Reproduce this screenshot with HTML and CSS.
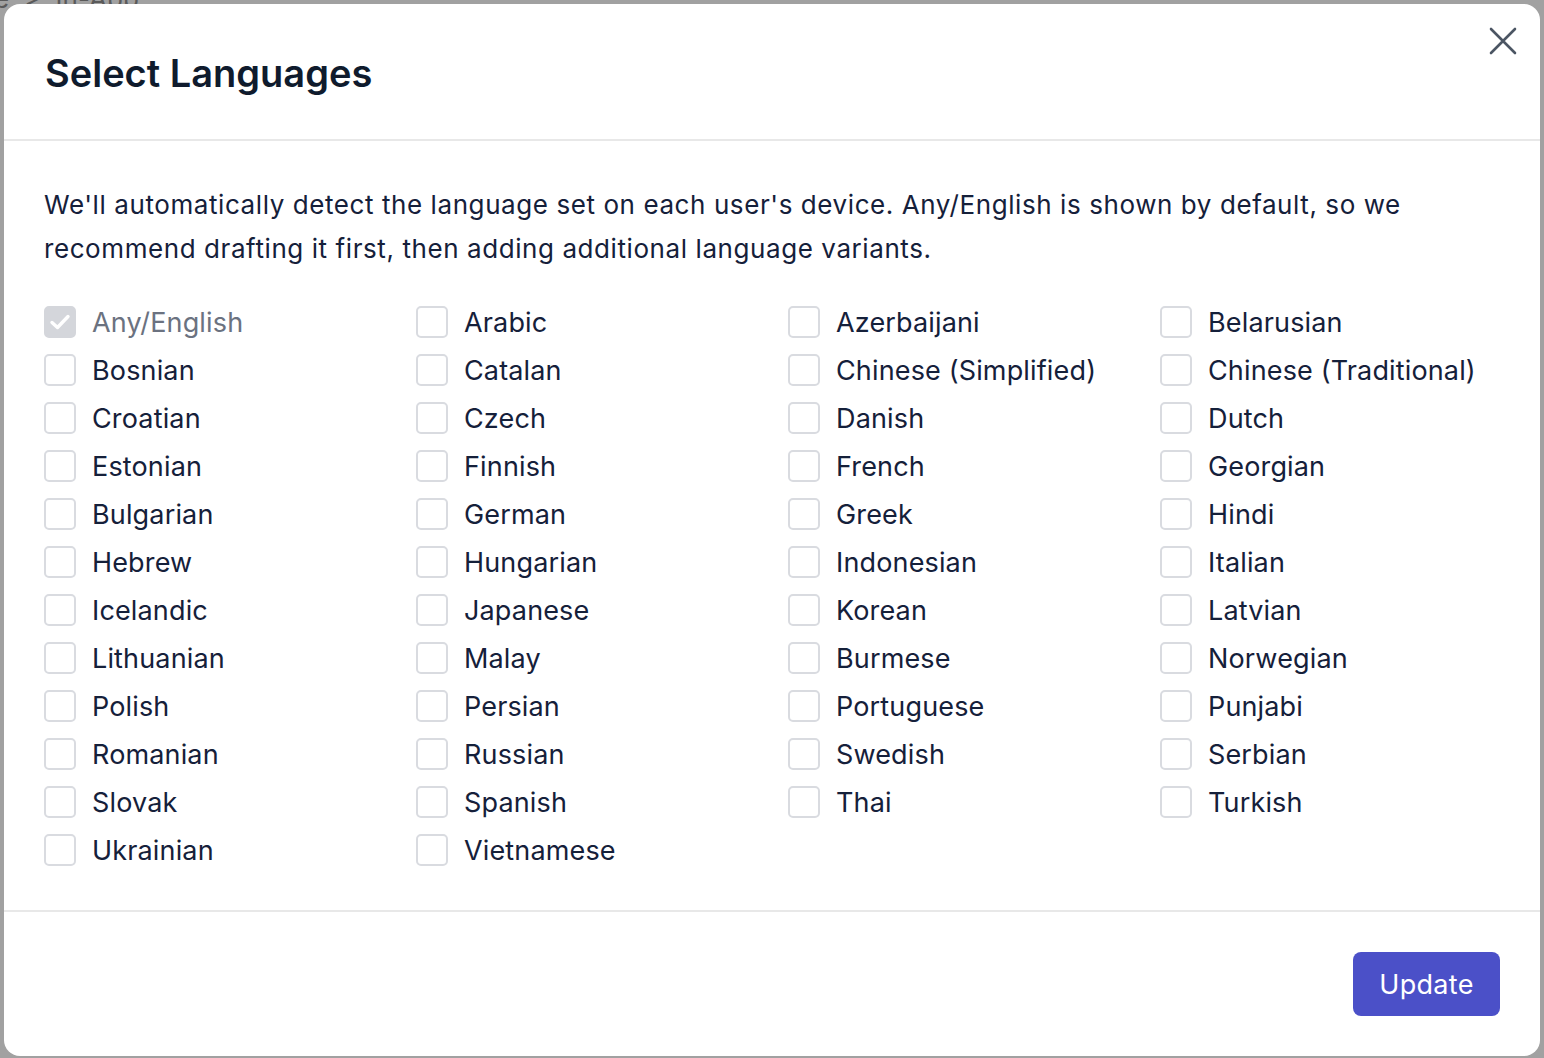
FILE: index.html
```html
<!DOCTYPE html>
<html lang="en">
<head>
<meta charset="utf-8">
<title>Select Languages</title>
<link rel="stylesheet" href="styles.css">
</head>
<body>
<div class="backdrop-text">e &nbsp;&gt;&nbsp; In-App</div>
<div class="modal">
  <header class="modal-header">
    <h1 class="modal-title">Select Languages</h1>
    <button class="close-btn" aria-label="Close">
      <svg width="30" height="30" viewBox="0 0 30 30"><path d="M3 3L27 27M27 3L3 27" stroke="#4b5563" stroke-width="2.6" stroke-linecap="round" fill="none"/></svg>
    </button>
  </header>
  <main class="modal-body">
    <p class="intro">We'll automatically detect the language set on each user's device. Any/English is shown by default, so we recommend drafting it first, then adding additional language variants.</p>
    <div class="lang-grid">
      <label class="lang disabled"><span class="box checked"><svg width="22" height="18" viewBox="0 0 22 18"><path d="M3 9.5L8.5 14.5L19 3.5" stroke="#fff" stroke-width="3.4" stroke-linecap="round" stroke-linejoin="round" fill="none"/></svg></span><span class="name">Any/English</span></label>
      <label class="lang"><span class="box"></span><span class="name">Arabic</span></label>
      <label class="lang"><span class="box"></span><span class="name">Azerbaijani</span></label>
      <label class="lang"><span class="box"></span><span class="name">Belarusian</span></label>
      <label class="lang"><span class="box"></span><span class="name">Bosnian</span></label>
      <label class="lang"><span class="box"></span><span class="name">Catalan</span></label>
      <label class="lang"><span class="box"></span><span class="name">Chinese (Simplified)</span></label>
      <label class="lang"><span class="box"></span><span class="name">Chinese (Traditional)</span></label>
      <label class="lang"><span class="box"></span><span class="name">Croatian</span></label>
      <label class="lang"><span class="box"></span><span class="name">Czech</span></label>
      <label class="lang"><span class="box"></span><span class="name">Danish</span></label>
      <label class="lang"><span class="box"></span><span class="name">Dutch</span></label>
      <label class="lang"><span class="box"></span><span class="name">Estonian</span></label>
      <label class="lang"><span class="box"></span><span class="name">Finnish</span></label>
      <label class="lang"><span class="box"></span><span class="name">French</span></label>
      <label class="lang"><span class="box"></span><span class="name">Georgian</span></label>
      <label class="lang"><span class="box"></span><span class="name">Bulgarian</span></label>
      <label class="lang"><span class="box"></span><span class="name">German</span></label>
      <label class="lang"><span class="box"></span><span class="name">Greek</span></label>
      <label class="lang"><span class="box"></span><span class="name">Hindi</span></label>
      <label class="lang"><span class="box"></span><span class="name">Hebrew</span></label>
      <label class="lang"><span class="box"></span><span class="name">Hungarian</span></label>
      <label class="lang"><span class="box"></span><span class="name">Indonesian</span></label>
      <label class="lang"><span class="box"></span><span class="name">Italian</span></label>
      <label class="lang"><span class="box"></span><span class="name">Icelandic</span></label>
      <label class="lang"><span class="box"></span><span class="name">Japanese</span></label>
      <label class="lang"><span class="box"></span><span class="name">Korean</span></label>
      <label class="lang"><span class="box"></span><span class="name">Latvian</span></label>
      <label class="lang"><span class="box"></span><span class="name">Lithuanian</span></label>
      <label class="lang"><span class="box"></span><span class="name">Malay</span></label>
      <label class="lang"><span class="box"></span><span class="name">Burmese</span></label>
      <label class="lang"><span class="box"></span><span class="name">Norwegian</span></label>
      <label class="lang"><span class="box"></span><span class="name">Polish</span></label>
      <label class="lang"><span class="box"></span><span class="name">Persian</span></label>
      <label class="lang"><span class="box"></span><span class="name">Portuguese</span></label>
      <label class="lang"><span class="box"></span><span class="name">Punjabi</span></label>
      <label class="lang"><span class="box"></span><span class="name">Romanian</span></label>
      <label class="lang"><span class="box"></span><span class="name">Russian</span></label>
      <label class="lang"><span class="box"></span><span class="name">Swedish</span></label>
      <label class="lang"><span class="box"></span><span class="name">Serbian</span></label>
      <label class="lang"><span class="box"></span><span class="name">Slovak</span></label>
      <label class="lang"><span class="box"></span><span class="name">Spanish</span></label>
      <label class="lang"><span class="box"></span><span class="name">Thai</span></label>
      <label class="lang"><span class="box"></span><span class="name">Turkish</span></label>
      <label class="lang"><span class="box"></span><span class="name">Ukrainian</span></label>
      <label class="lang"><span class="box"></span><span class="name">Vietnamese</span></label>
    </div>
  </main>
  <footer class="modal-footer">
    <button class="update-btn">Update</button>
  </footer>
</div>
</body>
</html>
```

FILE: styles.css
```css
* { box-sizing: border-box; }
html, body { margin: 0; padding: 0; }
body {
  background: #a1a1a1;
  font-family: Inter, "Noto Sans", sans-serif;
  width: 1544px;
  height: 1058px;
  overflow: hidden;
  position: relative;
}
.backdrop-text {
  position: absolute;
  left: -6px;
  top: -17px;
  font-size: 26px;
  color: #5a5a5a;
  white-space: nowrap;
}
.modal {
  position: relative;
  margin: 4px;
  width: 1536px;
  height: 1052px;
  background: #fff;
  border-radius: 16px;
  display: flex;
  flex-direction: column;
}
.modal-header {
  height: 137px;
  border-bottom: 2px solid #e8e8e8;
  display: flex;
  align-items: center;
  padding: 0 41px;
}
.modal-title {
  margin: 3px 0 0 0;
  font-size: 38px;
  font-weight: 600;
  color: #0f1b2d;
  letter-spacing: 0;
}
.close-btn {
  position: absolute;
  top: 22px;
  right: 22px;
  background: none;
  border: 0;
  padding: 0;
  width: 30px;
  height: 30px;
  cursor: pointer;
}
.modal-body {
  flex: 1;
  padding: 42px 40px 0 40px;
}
.intro {
  margin: 0 0 27px 0;
  max-width: 1412px;
  font-size: 26px;
  line-height: 44px;
  letter-spacing: 0.58px;
  color: #15203a;
}
.lang-grid {
  display: grid;
  grid-template-columns: repeat(4, 372px);
  grid-auto-rows: 48px;
}
.lang {
  display: flex;
  align-items: center;
  gap: 16px;
  font-size: 27px;
  letter-spacing: 0.15px;
  color: #15203a;
}
.lang.disabled { color: #6b7280; }
.box {
  width: 32px;
  height: 32px;
  border: 2px solid #d9dbe0;
  border-radius: 5px;
  background: #fff;
  display: flex;
  align-items: center;
  justify-content: center;
  flex-shrink: 0;
}
.box.checked {
  background: #d4d6db;
  border-color: #d4d6db;
}
.modal-footer {
  height: 146px;
  border-top: 2px solid #e8e8e8;
  display: flex;
  align-items: center;
  justify-content: flex-end;
  padding: 0 40px 0 0;
}
.update-btn {
  width: 147px;
  height: 64px;
  background: #4b50c8;
  color: #fff;
  border: 0;
  border-radius: 8px;
  font-family: Inter, "Noto Sans", sans-serif;
  font-size: 27px;
  letter-spacing: 0.3px;
}
```
